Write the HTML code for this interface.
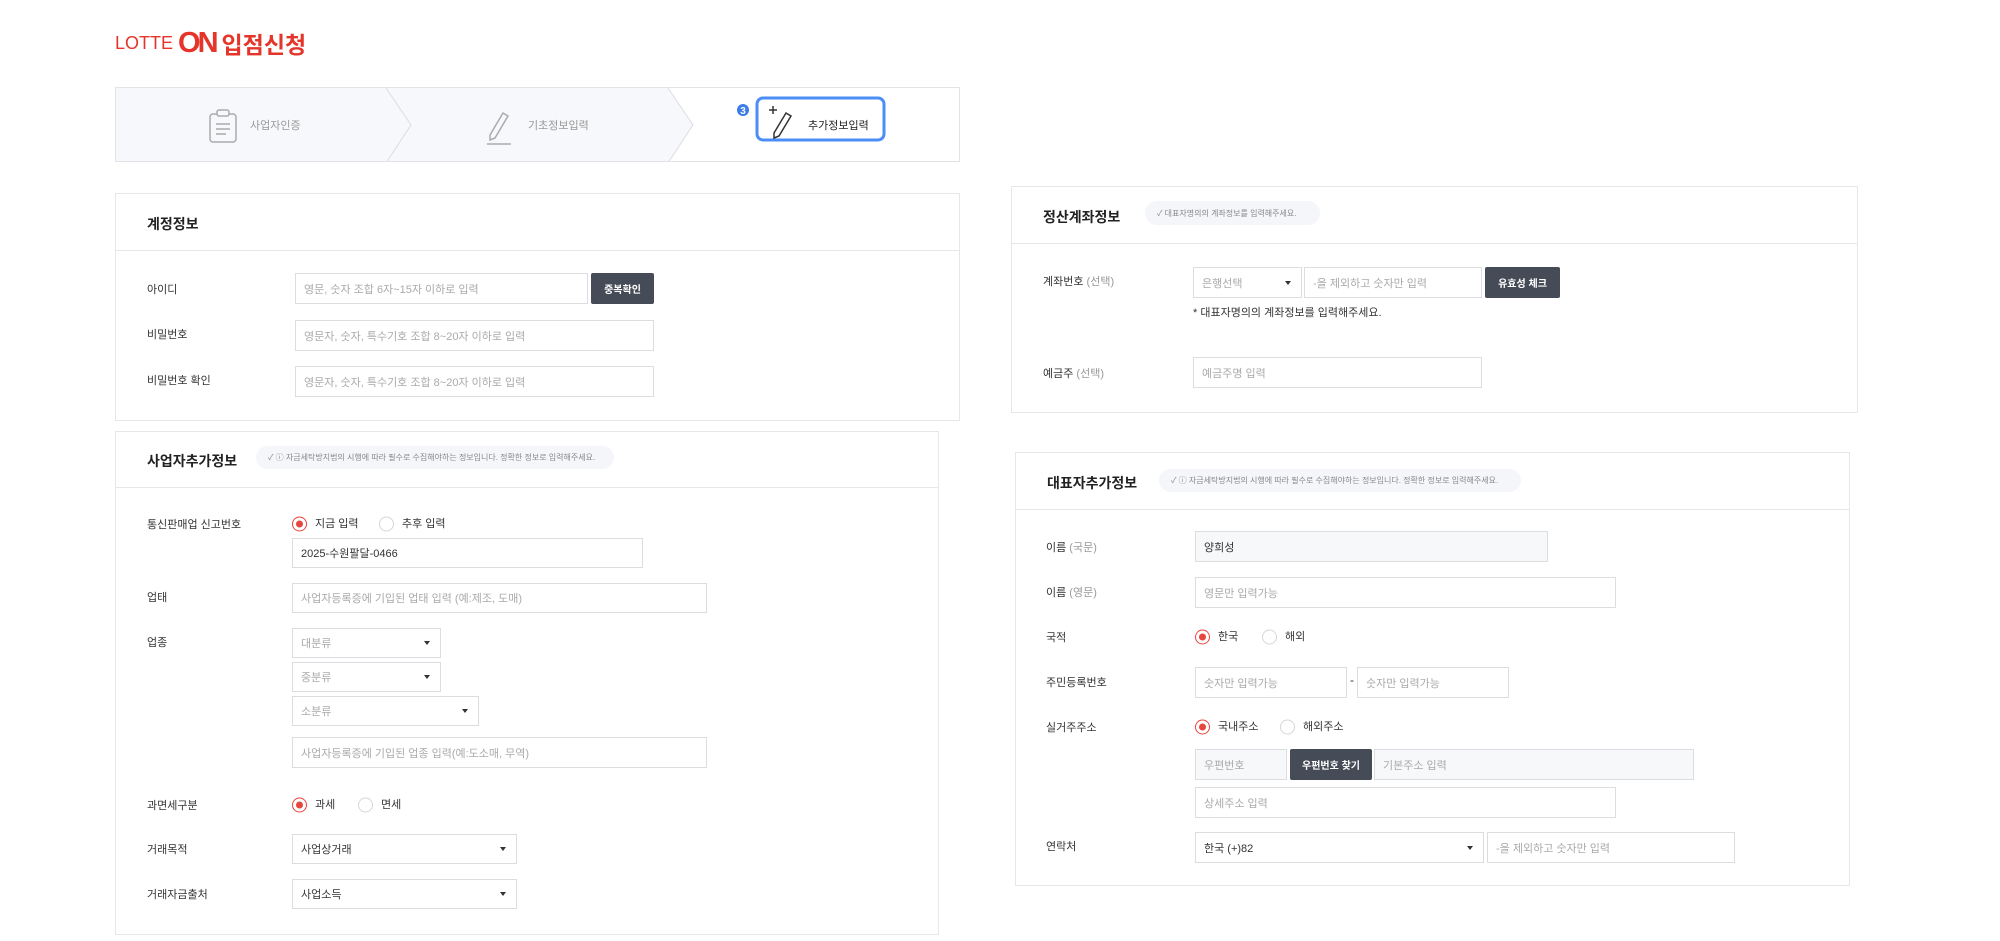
<!DOCTYPE html>
<html><head><meta charset="utf-8"><style>
*{box-sizing:border-box;margin:0;padding:0}
body{width:2000px;height:941px;background:#fff;font-family:"Liberation Sans","Noto Sans CJK KR",sans-serif;color:#333;position:relative;overflow:hidden}
.a{position:absolute}
.panel{position:absolute;border:1px solid #e6e7ea;background:#fff}
.hd{position:absolute;left:0;right:0;border-bottom:1px solid #e6e7ea}
.title{position:absolute;font-size:14px;font-weight:bold;color:#222}
.pill{position:absolute;background:#f5f6fa;border-radius:13px;font-size:8px;color:#888;padding-left:12px;display:flex;align-items:center;white-space:nowrap}
.lb{position:absolute;font-size:11px;color:#333;transform:translateY(-50%)}
.lb span{color:#999}
.in{position:absolute;border:1px solid #dcdde0;background:#fff;font-size:11px;color:#aaa;padding-left:8px;display:flex;align-items:center;white-space:nowrap}
.in.v{color:#333}
.in.g{background:#f7f8fa}
.sel::after{content:"";position:absolute;right:10px;top:50%;margin-top:-2px;border:3px solid transparent;border-top:4px solid #333}
.btn{position:absolute;background:#464c57;color:#fff;font-size:10px;font-weight:bold;display:flex;align-items:center;justify-content:center;border-radius:2px}
.rd{position:absolute;width:15px;height:15px;border-radius:50%;border:1px solid #d5d6d9;background:#fff;transform:translateY(-50%)}
.rd.on{border-color:#e8453c}
.rd.on::after{content:"";position:absolute;left:3px;top:3px;width:7px;height:7px;border-radius:50%;background:#e8453c}
.rt{position:absolute;font-size:11px;color:#333;transform:translateY(-50%)}
</style></head><body>

<!-- logo -->
<div class="a" style="left:115px;top:29px;height:28px;display:flex;align-items:center;white-space:nowrap">
<span style="font-size:18px;color:#e5352a;letter-spacing:0px">LOTTE</span>
<span style="font-size:29px;font-weight:bold;color:#e5352a;margin-left:5px;letter-spacing:-3px">ON</span>
<span style="font-size:23px;font-weight:bold;color:#e5352a;margin-left:6px">입점신청</span>
</div>

<!-- steps -->
<div class="a" style="left:115px;top:87px;width:845px;height:75px;border:1px solid #e2e3e6;background:#fff;overflow:hidden">
<svg class="a" style="left:0;top:0" width="845" height="75">
<polygon points="0,0 270,0 295,37 270,75 0,75" fill="#f7f8fb"/>
<polygon points="270,0 552,0 577,37 552,75 270,75" fill="#f7f8fb"/>
<polyline points="270,0 295,37 270,75" fill="none" stroke="#dcdde0"/>
<polyline points="552,0 577,37 552,75" fill="none" stroke="#dcdde0"/>
<rect x="94" y="26" width="26" height="28" rx="3" fill="none" stroke="#aaa" stroke-width="1.5"/>
<rect x="101" y="22" width="12" height="6" rx="2" fill="#f7f8fb" stroke="#aaa" stroke-width="1.5"/>
<line x1="100" y1="36" x2="114" y2="36" stroke="#aaa" stroke-width="1.5"/>
<line x1="100" y1="41" x2="114" y2="41" stroke="#aaa" stroke-width="1.5"/>
<line x1="100" y1="46" x2="110" y2="46" stroke="#aaa" stroke-width="1.5"/>
<path d="M374 47 L387 25 L392 28 L379 50 L374 52 Z" fill="none" stroke="#aaa" stroke-width="1.5"/>
<line x1="371" y1="56" x2="395" y2="56" stroke="#aaa" stroke-width="1.5"/>
<rect x="641" y="10" width="127" height="42" rx="6" fill="#fff" stroke="#4b8ef5" stroke-width="3"/>
<circle cx="627" cy="22" r="6" fill="#3d7de8"/>
<text x="627" y="26" font-size="10" font-weight="bold" fill="#fff" text-anchor="middle" font-family="Liberation Sans">3</text>
<line x1="653" y1="22" x2="661" y2="22" stroke="#333" stroke-width="1.5"/>
<line x1="657" y1="18" x2="657" y2="26" stroke="#333" stroke-width="1.5"/>
<path d="M658 45 L670 25 L675 28 L663 48 L658 50 Z" fill="none" stroke="#333" stroke-width="1.5"/>
</svg>
<div class="a" style="left:134px;top:29px;font-size:11px;color:#999">사업자인증</div>
<div class="a" style="left:412px;top:29px;font-size:11px;color:#999">기초정보입력</div>
<div class="a" style="left:692px;top:29px;font-size:11px;color:#222">추가정보입력</div>
</div>

<!-- 계정정보 -->
<div class="panel" style="left:115px;top:193px;width:845px;height:228px">
<div class="hd" style="top:0;height:57px"></div>
<div class="title" style="left:31px;top:20px">계정정보</div>
</div>
<div class="lb" style="left:147px;top:289px">아이디</div>
<div class="in" style="left:295px;top:273px;width:293px;height:31px">영문, 숫자 조합 6자~15자 이하로 입력</div>
<div class="btn" style="left:591px;top:273px;width:63px;height:31px">중복확인</div>
<div class="lb" style="left:147px;top:334px">비밀번호</div>
<div class="in" style="left:295px;top:320px;width:359px;height:31px">영문자, 숫자, 특수기호 조합 8~20자 이하로 입력</div>
<div class="lb" style="left:147px;top:380px">비밀번호 확인</div>
<div class="in" style="left:295px;top:366px;width:359px;height:31px">영문자, 숫자, 특수기호 조합 8~20자 이하로 입력</div>

<!-- 사업자추가정보 -->
<div class="panel" style="left:115px;top:431px;width:824px;height:504px">
<div class="hd" style="top:0;height:56px"></div>
<div class="title" style="left:31px;top:19px">사업자추가정보</div>
<div class="pill" style="left:140px;top:14px;width:358px;height:23px">✓ ⓘ 자금세탁방지법의 시행에 따라 필수로 수집해야하는 정보입니다. 정확한 정보로 입력해주세요.</div>
</div>
<div class="lb" style="left:147px;top:524px">통신판매업 신고번호</div>
<div class="rd on" style="left:292px;top:524px"></div><div class="rt" style="left:315px;top:523px">지금 입력</div>
<div class="rd" style="left:379px;top:524px"></div><div class="rt" style="left:402px;top:523px">추후 입력</div>
<div class="in v" style="left:292px;top:538px;width:351px;height:30px">2025-수원팔달-0466</div>
<div class="lb" style="left:147px;top:597px">업태</div>
<div class="in" style="left:292px;top:583px;width:415px;height:30px">사업자등록증에 기입된 업태 입력 (예:제조, 도매)</div>
<div class="lb" style="left:147px;top:642px">업종</div>
<div class="in sel" style="left:292px;top:628px;width:149px;height:30px">대분류</div>
<div class="in sel" style="left:292px;top:662px;width:149px;height:30px">중분류</div>
<div class="in sel" style="left:292px;top:696px;width:187px;height:30px">소분류</div>
<div class="in" style="left:292px;top:737px;width:415px;height:31px">사업자등록증에 기입된 업종 입력(예:도소매, 무역)</div>
<div class="lb" style="left:147px;top:805px">과면세구분</div>
<div class="rd on" style="left:292px;top:805px"></div><div class="rt" style="left:315px;top:804px">과세</div>
<div class="rd" style="left:358px;top:805px"></div><div class="rt" style="left:381px;top:804px">면세</div>
<div class="lb" style="left:147px;top:849px">거래목적</div>
<div class="in sel v" style="left:292px;top:834px;width:225px;height:30px">사업상거래</div>
<div class="lb" style="left:147px;top:894px">거래자금출처</div>
<div class="in sel v" style="left:292px;top:879px;width:225px;height:30px">사업소득</div>

<!-- 정산계좌정보 -->
<div class="panel" style="left:1011px;top:186px;width:847px;height:227px">
<div class="hd" style="top:0;height:57px"></div>
<div class="title" style="left:31px;top:20px">정산계좌정보</div>
<div class="pill" style="left:133px;top:14px;width:175px;height:24px">✓ 대표자명의의 계좌정보를 입력해주세요.</div>
</div>
<div class="lb" style="left:1043px;top:281px">계좌번호 <span>(선택)</span></div>
<div class="in sel" style="left:1193px;top:267px;width:109px;height:31px">은행선택</div>
<div class="in" style="left:1304px;top:267px;width:178px;height:31px">-을 제외하고 숫자만 입력</div>
<div class="btn" style="left:1485px;top:267px;width:75px;height:31px">유효성 체크</div>
<div class="a" style="left:1193px;top:304px;font-size:11px;color:#333">* 대표자명의의 계좌정보를 입력해주세요.</div>
<div class="lb" style="left:1043px;top:373px">예금주 <span>(선택)</span></div>
<div class="in" style="left:1193px;top:357px;width:289px;height:31px">예금주명 입력</div>

<!-- 대표자추가정보 -->
<div class="panel" style="left:1015px;top:452px;width:835px;height:434px">
<div class="hd" style="top:0;height:57px"></div>
<div class="title" style="left:31px;top:20px">대표자추가정보</div>
<div class="pill" style="left:143px;top:16px;width:362px;height:23px">✓ ⓘ 자금세탁방지법의 시행에 따라 필수로 수집해야하는 정보입니다. 정확한 정보로 입력해주세요.</div>
</div>
<div class="lb" style="left:1046px;top:547px">이름 <span>(국문)</span></div>
<div class="in g v" style="left:1195px;top:531px;width:353px;height:31px">양희성</div>
<div class="lb" style="left:1046px;top:592px">이름 <span>(영문)</span></div>
<div class="in" style="left:1195px;top:577px;width:421px;height:31px">영문만 입력가능</div>
<div class="lb" style="left:1046px;top:637px">국적</div>
<div class="rd on" style="left:1195px;top:637px"></div><div class="rt" style="left:1218px;top:636px">한국</div>
<div class="rd" style="left:1262px;top:637px"></div><div class="rt" style="left:1285px;top:636px">해외</div>
<div class="lb" style="left:1046px;top:682px">주민등록번호</div>
<div class="in" style="left:1195px;top:667px;width:152px;height:31px">숫자만 입력가능</div>
<div class="a" style="left:1350px;top:673px;font-size:12px;color:#333">-</div>
<div class="in" style="left:1357px;top:667px;width:152px;height:31px">숫자만 입력가능</div>
<div class="lb" style="left:1046px;top:727px">실거주주소</div>
<div class="rd on" style="left:1195px;top:727px"></div><div class="rt" style="left:1218px;top:726px">국내주소</div>
<div class="rd" style="left:1280px;top:727px"></div><div class="rt" style="left:1303px;top:726px">해외주소</div>
<div class="in g" style="left:1195px;top:749px;width:92px;height:31px">우편번호</div>
<div class="btn" style="left:1290px;top:749px;width:82px;height:31px">우편번호 찾기</div>
<div class="in g" style="left:1374px;top:749px;width:320px;height:31px">기본주소 입력</div>
<div class="in" style="left:1195px;top:787px;width:421px;height:31px">상세주소 입력</div>
<div class="lb" style="left:1046px;top:846px">연락처</div>
<div class="in sel v" style="left:1195px;top:832px;width:289px;height:31px">한국 (+)82</div>
<div class="in" style="left:1487px;top:832px;width:248px;height:31px">-을 제외하고 숫자만 입력</div>

</body></html>
